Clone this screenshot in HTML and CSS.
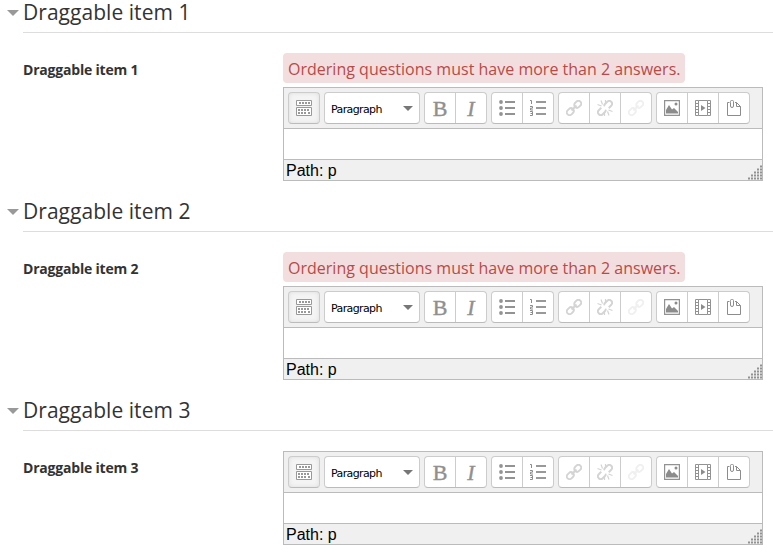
FILE: index.html
```
<!DOCTYPE html>
<html lang="en">
<head>
    <meta charset="UTF-8">
    <meta name="viewport" content="width=device-width, initial-scale=1.0">
    <title>Ordering question</title>
    <link rel="stylesheet" href="styles.css">
</head>
<body>
    <!-- Toolbar icons -->
    <svg class="icon-defs" width="0" height="0">
        <symbol id="toggle" viewBox="0 0 16 16">
            <path d="M.5 .5h15v5H.5zM.5 7.500h15v8H.5z" fill="#fff" stroke="#999"/>
            <path d="M3 3h11M2 10h12M2 13h2M5 13h6M12 13h2" fill="none" stroke="#999" stroke-width="2" stroke-dasharray="2 1"/>
        </symbol>
        <symbol id="bullets" viewBox="0 0 16 16">
            <g fill="#939393"><circle cx="2" cy="2" r="1.900"/><circle cx="2" cy="8" r="1.900"/><circle cx="2" cy="14" r="1.900"/><path d="M6 1h10v2H6zM6 7h10v2H6zM6 13h10v2H6z"/></g>
        </symbol>
        <symbol id="numbers" viewBox="0 0 16 16">
            <path d="M6 1h10v2H6zM6 7h10v2H6zM6 13h10v2H6z" fill="#999"/>
            <path d="M0 .5h1.500V4M0 6.500h2.500v1.700H.5v1.800H3M0 11.500h2.500v4H0M.5 13.500h2" fill="none" stroke="#8c8c8c"/>
        </symbol>
        <symbol id="link" viewBox="0 0 16 16">
            <g transform="rotate(-45 8 8)" fill="none" stroke="currentColor" stroke-width="1.900"><rect x="-1" y="5.200" width="7.500" height="5.600" rx="2.800"/><rect x="9.500" y="5.200" width="7.500" height="5.600" rx="2.800"/><path d="M4.500 8h7"/></g>
        </symbol>
        <symbol id="unlink" viewBox="0 0 16 16">
            <g fill="none" stroke="currentColor" stroke-width="1.900"><g transform="rotate(-45 8 8)"><path d="M5.500 5.200H2a2.800 2.800 0 0 0 0 5.600h3.500q1.300 0 1.300-1.300M10.500 10.800H14a2.800 2.800 0 0 0 0-5.600h-3.500q-1.300 0-1.300 1.300"/></g><path d="M4 .5l1.500 4M.5 4.500l4 1.500M8.500 0v3.500M12 15.500l-1.500-4M15.500 11.500l-4-1.500M7.500 12.500V16" stroke-width="1.200"/></g>
        </symbol>
        <symbol id="image" viewBox="0 0 16 16">
            <path d="M.6 .6h14.800v14.800H.6z" fill="none" stroke="#929292" stroke-width="1.200"/>
            <path d="M2 13.500V10l3-5 3 4.500 2-1.500 4 4v1.500z" fill="#8c8c8c"/><circle cx="12" cy="4" r="1.500" fill="#8c8c8c"/>
        </symbol>
        <symbol id="media" viewBox="0 0 16 16">
            <path d="M.5 .5h3v15h-3zM12.500 .5h3v15h-3zM.5 3.500h3M.5 6.500h3M.5 9.500h3M.5 12.500h3M12.500 3.500h3M12.500 6.500h3M12.500 9.500h3M12.500 12.500h3M3.500 .5h9M3.500 15.500h9" fill="none" stroke="#929292"/>
            <path d="M6 5l4.500 3L6 11z" fill="#8c8c8c"/>
        </symbol>
        <symbol id="files" viewBox="0 0 16 16">
            <path d="M3.500 2.500h-2v13h13v-9l-4-4H9M10.500 2.500v4h4" fill="none" stroke="#8c8c8c"/>
            <path d="M4.500 2.500v3.500a1.500 1.500 0 0 0 3 0V1.500a1 1 0 0 0-1-1h-1a1 1 0 0 0-1 1z" fill="#fff" stroke="#8c8c8c"/>
        </symbol>
        <symbol id="grip" viewBox="0 0 15 15">
            <path d="M13 1.500h2M10 4.500h5M7 7.500h8M4 10.500h11M1 13.500h14" fill="none" stroke="#929292" stroke-width="2" stroke-dasharray="2 1"/>
        </symbol>
    </svg>

    <section class="item">
        <h3>Draggable item 1</h3>
        <div class="row">
            <div class="label">Draggable item 1</div>
            <div class="field">
                <div class="error">Ordering questions must have more than 2 answers.</div>
                <div class="editor">
                    <div class="toolbar">
                        <div class="group active"><span class="btn"><svg class="icon"><use href="#toggle"/></svg></span></div>
                        <div class="format"><span>Paragraph</span></div>
                        <div class="group"><span class="btn bold">B</span><span class="btn italic">I</span></div>
                        <div class="group"><span class="btn"><svg class="icon"><use href="#bullets"/></svg></span><span class="btn"><svg class="icon"><use href="#numbers"/></svg></span></div>
                        <div class="group disabled"><span class="btn"><svg class="icon"><use href="#link"/></svg></span><span class="btn"><svg class="icon"><use href="#unlink"/></svg></span><span class="btn faint"><svg class="icon"><use href="#link"/></svg></span></div>
                        <div class="group"><span class="btn"><svg class="icon"><use href="#image"/></svg></span><span class="btn"><svg class="icon"><use href="#media"/></svg></span><span class="btn"><svg class="icon"><use href="#files"/></svg></span></div>
                    </div>
                    <div class="content"></div>
                    <div class="status"><span>Path: p</span><svg class="grip"><use href="#grip"/></svg></div>
                </div>
            </div>
        </div>
    </section>

    <section class="item">
        <h3>Draggable item 2</h3>
        <div class="row">
            <div class="label">Draggable item 2</div>
            <div class="field">
                <div class="error">Ordering questions must have more than 2 answers.</div>
                <div class="editor">
                    <div class="toolbar">
                        <div class="group active"><span class="btn"><svg class="icon"><use href="#toggle"/></svg></span></div>
                        <div class="format"><span>Paragraph</span></div>
                        <div class="group"><span class="btn bold">B</span><span class="btn italic">I</span></div>
                        <div class="group"><span class="btn"><svg class="icon"><use href="#bullets"/></svg></span><span class="btn"><svg class="icon"><use href="#numbers"/></svg></span></div>
                        <div class="group disabled"><span class="btn"><svg class="icon"><use href="#link"/></svg></span><span class="btn"><svg class="icon"><use href="#unlink"/></svg></span><span class="btn faint"><svg class="icon"><use href="#link"/></svg></span></div>
                        <div class="group"><span class="btn"><svg class="icon"><use href="#image"/></svg></span><span class="btn"><svg class="icon"><use href="#media"/></svg></span><span class="btn"><svg class="icon"><use href="#files"/></svg></span></div>
                    </div>
                    <div class="content"></div>
                    <div class="status"><span>Path: p</span><svg class="grip"><use href="#grip"/></svg></div>
                </div>
            </div>
        </div>
    </section>

    <section class="item">
        <h3>Draggable item 3</h3>
        <div class="row">
            <div class="label">Draggable item 3</div>
            <div class="field">
                <div class="editor">
                    <div class="toolbar">
                        <div class="group active"><span class="btn"><svg class="icon"><use href="#toggle"/></svg></span></div>
                        <div class="format"><span>Paragraph</span></div>
                        <div class="group"><span class="btn bold">B</span><span class="btn italic">I</span></div>
                        <div class="group"><span class="btn"><svg class="icon"><use href="#bullets"/></svg></span><span class="btn"><svg class="icon"><use href="#numbers"/></svg></span></div>
                        <div class="group disabled"><span class="btn"><svg class="icon"><use href="#link"/></svg></span><span class="btn"><svg class="icon"><use href="#unlink"/></svg></span><span class="btn faint"><svg class="icon"><use href="#link"/></svg></span></div>
                        <div class="group"><span class="btn"><svg class="icon"><use href="#image"/></svg></span><span class="btn"><svg class="icon"><use href="#media"/></svg></span><span class="btn"><svg class="icon"><use href="#files"/></svg></span></div>
                    </div>
                    <div class="content"></div>
                    <div class="status"><span>Path: p</span><svg class="grip"><use href="#grip"/></svg></div>
                </div>
            </div>
        </div>
    </section>
</body>
</html>
```
FILE: styles.css
```
* {
    box-sizing: border-box;
}

body {
    margin: 0;
    height: 552px;
    background-color: #fff;
    color: #333;
    font-family: "Open Sans", sans-serif;
}

.icon-defs {
    display: block;
}

.item {
    padding-left: 23px;
}

h3 {
    display: flex;
    align-items: center;
    height: 33px;
    margin: 0;
    padding-bottom: 7px;
    border-bottom: 1px solid #ddd;
    font-size: 21px;
    font-weight: normal;
    line-height: 25px;
    letter-spacing: 0.04px;
}

/* collapse arrow in the left gutter */
h3::before {
    content: "";
    margin-left: -16px;
    margin-right: 4px;
    border: 6px solid transparent;
    border-top-color: #999;
    border-bottom: 0;
}

.row {
    display: flex;
    padding: 20px 0 18px;
}

.label {
    width: 260px;
    padding-top: 7px;
    font-size: 14px;
    font-weight: bold;
    line-height: 20px;
    letter-spacing: -0.2px;
}

.field {
    width: 480px;
}

.error {
    width: 402px;
    height: 30px;
    margin-bottom: 4px;
    padding: 1px 5px 0;
    border-radius: 4px;
    background-color: #f2dede;
    color: #b94a48;
    font-size: 16px;
    line-height: 31px;
    letter-spacing: 0.01px;
    white-space: nowrap;
}

.editor {
    border: 1px solid #bbb;
}

.toolbar {
    display: flex;
    gap: 4px;
    height: 40px;
    padding: 4px;
    background-color: #f0f0f0;
}

.group, .format {
    display: flex;
    height: 32px;
    border: 1px solid #ccc;
    border-bottom-color: #bbb;
    border-radius: 4px;
    background-color: #fff;
}

.btn {
    display: flex;
    align-items: center;
    justify-content: center;
    width: 30px;
}

.btn + .btn {
    width: 31px;
    border-left: 1px solid #ccc;
}

.group.active {
    background-color: #f4f4f4;
    box-shadow: inset 0 0 4px #ddd;
}

.format {
    align-items: center;
    justify-content: space-between;
    width: 96px;
    padding: 0 6px;
    color: #000;
    font-family: "DejaVu Sans", sans-serif;
    font-size: 11px;
    letter-spacing: -0.62px;
}

.format span {
    padding-top: 2px;
}

.format::after {
    content: "";
    border: 5px solid transparent;
    border-top-color: #777;
    border-bottom: 0;
}

.bold, .italic {
    padding-top: 1px;
    color: #909090;
    font-family: "Liberation Serif", serif;
    font-size: 22px;
    -webkit-text-stroke: 0.4px #909090;
}

.italic {
    font-style: italic;
}

.icon {
    width: 16px;
    height: 16px;
}

.disabled {
    color: #d4d4d4;
}

.faint {
    color: #f0f0f0;
}

.content {
    height: 32px;
    border-top: 1px solid #bbb;
    border-bottom: 1px solid #bbb;
}

.status {
    display: flex;
    align-items: flex-end;
    justify-content: space-between;
    height: 20px;
    padding-left: 2px;
    background-color: #f0f0f0;
    color: #000;
    font-family: "Liberation Sans", Arial, sans-serif;
    font-size: 16px;
    line-height: 18px;
}

.grip {
    width: 15px;
    height: 15px;
}
```
